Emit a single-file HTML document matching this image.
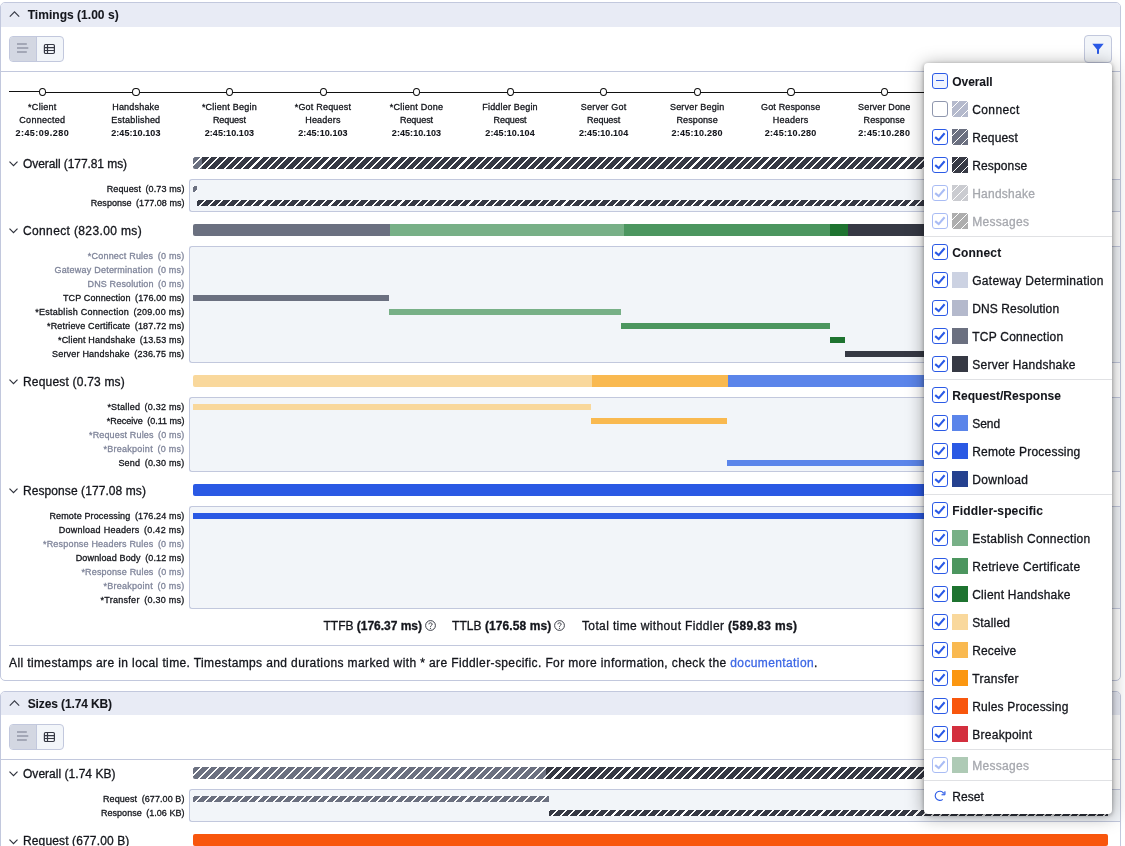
<!DOCTYPE html>
<html><head><meta charset="utf-8"><title>Timings</title><style>
html,body{margin:0;padding:0}
body{width:1125px;height:846px;overflow:hidden;background:#fff;position:relative;font-family:"Liberation Sans", sans-serif;color:#14161c}
#root{position:absolute;left:0;top:0;width:1125px;height:846px;overflow:hidden;will-change:transform}
#root>div,#root>span,#root>svg,.a{position:absolute}
.t{white-space:nowrap;-webkit-text-stroke:0.3px currentColor}
.panel{border:1px solid #c2c8dd;border-radius:5px;background:#fff;overflow:hidden}
.ph{height:23.7px;background:#e8ebf5}
</style></head><body><div id="root">
<div class="panel" style="left:0;top:2px;width:1119px;height:677px;"><div class="ph" style="height:23.7px"></div></div>
<svg class="a" style="left:8.7px;top:9.0px" width="11" height="11" viewBox="0 0 11 11"><path d="M0.8 7.6 L5.5 2.9 L10.2 7.6" fill="none" stroke="#3a3d48" stroke-width="1.2"/></svg>
<span id="t1" class="t" style="left:27.7px;top:6.9px;font-size:12px;line-height:16px;font-weight:700;color:#14161c;-webkit-text-stroke-width:.08px;letter-spacing:0.032px;">Timings (1.00 s)</span>
<div class="a" style="left:9px;top:36px;width:52.5px;height:24px;border:1px solid #c2c8dd;border-radius:4px;background:#f2f5f9;overflow:hidden"><div style="width:26.3px;height:25px;background:#d3d7e2;border-right:1px solid #c2c8dd"></div></div>
<svg class="a" style="left:16px;top:42.0px" width="13" height="12" viewBox="0 0 13 12"><path d="M1 2h9.8M1 6h11.3M1 10h9.8" stroke="#747989" stroke-width="1.15" fill="none"/></svg>
<svg class="a" style="left:43.3px;top:42.8px" width="13" height="12" viewBox="0 0 13 12"><rect x="1.4" y="1.5" width="10" height="9" rx="1.2" fill="none" stroke="#363944" stroke-width="1.2"/><path d="M1.4 4.6h10M1.4 7.5h10M4.5 1.5v9" stroke="#363944" stroke-width="1.2" fill="none"/></svg>
<div style="left:1px;top:71px;width:1119px;height:1px;background:#c2c8dd"></div>
<div class="panel" style="left:0;top:691px;width:1119px;height:200px;"><div class="ph" style="height:22.7px"></div></div>
<svg class="a" style="left:8.7px;top:698.0px" width="11" height="11" viewBox="0 0 11 11"><path d="M0.8 7.6 L5.5 2.9 L10.2 7.6" fill="none" stroke="#3a3d48" stroke-width="1.2"/></svg>
<span id="t2" class="t" style="left:27.7px;top:695.5px;font-size:12px;line-height:16px;font-weight:700;color:#14161c;-webkit-text-stroke-width:.08px;letter-spacing:-0.116px;">Sizes (1.74 KB)</span>
<div class="a" style="left:9px;top:724.4px;width:52.5px;height:24px;border:1px solid #c2c8dd;border-radius:4px;background:#f2f5f9;overflow:hidden"><div style="width:26.3px;height:25px;background:#d3d7e2;border-right:1px solid #c2c8dd"></div></div>
<svg class="a" style="left:16px;top:730.4px" width="13" height="12" viewBox="0 0 13 12"><path d="M1 2h9.8M1 6h11.3M1 10h9.8" stroke="#747989" stroke-width="1.15" fill="none"/></svg>
<svg class="a" style="left:43.3px;top:731.1999999999999px" width="13" height="12" viewBox="0 0 13 12"><rect x="1.4" y="1.5" width="10" height="9" rx="1.2" fill="none" stroke="#363944" stroke-width="1.2"/><path d="M1.4 4.6h10M1.4 7.5h10M4.5 1.5v9" stroke="#363944" stroke-width="1.2" fill="none"/></svg>
<div style="left:1px;top:759px;width:1119px;height:1px;background:#c2c8dd"></div>
<div class="a" style="left:1084px;top:35px;width:26px;height:26px;border:1px solid #c2c8dd;border-radius:4px;background:#f2f5f9"></div>
<svg class="a" style="left:1092.2px;top:43.4px" width="12" height="12" viewBox="0 0 12 12"><path d="M0.3 0.8h11.4L7 6.4v3.6c0 .6-.4 1-1 1s-1-.4-1-1V6.4z" fill="#2b5ae6"/></svg>
<div style="left:9px;top:91px;width:32px;height:1px;background:#111"></div>
<div style="left:41px;top:92px;width:1067px;height:1px;background:#111"></div>
<div class="a" style="left:38.85px;top:87.85000000000001px;width:5.3px;height:6.1px;border:1px solid #111;border-radius:50%;background:#fff"></div>
<span id="t3" class="t" style="left:42.3px;transform:translateX(-50%);top:100.5px;font-size:9px;line-height:13px;font-weight:400;color:#14161c;letter-spacing:0.269px;">*Client</span>
<span id="t4" class="t" style="left:42.3px;transform:translateX(-50%);top:114.1px;font-size:9px;line-height:13px;font-weight:400;color:#14161c;letter-spacing:0.261px;">Connected</span>
<span id="t5" class="t" style="left:42.3px;transform:translateX(-50%);top:127.1px;font-size:9px;line-height:13px;font-weight:700;color:#14161c;-webkit-text-stroke-width:.08px;letter-spacing:0.468px;">2:45:09.280</span>
<div class="a" style="left:132.39999999999998px;top:87.85000000000001px;width:5.3px;height:6.1px;border:1px solid #111;border-radius:50%;background:#fff"></div>
<span id="t6" class="t" style="left:135.85px;transform:translateX(-50%);top:100.5px;font-size:9px;line-height:13px;font-weight:400;color:#14161c;letter-spacing:0.195px;">Handshake</span>
<span id="t7" class="t" style="left:135.85px;transform:translateX(-50%);top:114.1px;font-size:9px;line-height:13px;font-weight:400;color:#14161c;letter-spacing:0.224px;">Established</span>
<span id="t8" class="t" style="left:135.85px;transform:translateX(-50%);top:127.1px;font-size:9px;line-height:13px;font-weight:700;color:#14161c;-webkit-text-stroke-width:.08px;letter-spacing:0.078px;">2:45:10.103</span>
<div class="a" style="left:225.94999999999996px;top:87.85000000000001px;width:5.3px;height:6.1px;border:1px solid #111;border-radius:50%;background:#fff"></div>
<span id="t9" class="t" style="left:229.39999999999998px;transform:translateX(-50%);top:100.5px;font-size:9px;line-height:13px;font-weight:400;color:#14161c;letter-spacing:0.228px;">*Client Begin</span>
<span id="t10" class="t" style="left:229.39999999999998px;transform:translateX(-50%);top:114.1px;font-size:9px;line-height:13px;font-weight:400;color:#14161c;letter-spacing:-0.076px;">Request</span>
<span id="t11" class="t" style="left:229.39999999999998px;transform:translateX(-50%);top:127.1px;font-size:9px;line-height:13px;font-weight:700;color:#14161c;-webkit-text-stroke-width:.08px;letter-spacing:0.078px;">2:45:10.103</span>
<div class="a" style="left:319.5px;top:87.85000000000001px;width:5.3px;height:6.1px;border:1px solid #111;border-radius:50%;background:#fff"></div>
<span id="t12" class="t" style="left:322.95px;transform:translateX(-50%);top:100.5px;font-size:9px;line-height:13px;font-weight:400;color:#14161c;letter-spacing:0.206px;">*Got Request</span>
<span id="t13" class="t" style="left:322.95px;transform:translateX(-50%);top:114.1px;font-size:9px;line-height:13px;font-weight:400;color:#14161c;letter-spacing:0.210px;">Headers</span>
<span id="t14" class="t" style="left:322.95px;transform:translateX(-50%);top:127.1px;font-size:9px;line-height:13px;font-weight:700;color:#14161c;-webkit-text-stroke-width:.08px;letter-spacing:0.078px;">2:45:10.103</span>
<div class="a" style="left:413.05px;top:87.85000000000001px;width:5.3px;height:6.1px;border:1px solid #111;border-radius:50%;background:#fff"></div>
<span id="t15" class="t" style="left:416.5px;transform:translateX(-50%);top:100.5px;font-size:9px;line-height:13px;font-weight:400;color:#14161c;letter-spacing:0.247px;">*Client Done</span>
<span id="t16" class="t" style="left:416.5px;transform:translateX(-50%);top:114.1px;font-size:9px;line-height:13px;font-weight:400;color:#14161c;letter-spacing:-0.076px;">Request</span>
<span id="t17" class="t" style="left:416.5px;transform:translateX(-50%);top:127.1px;font-size:9px;line-height:13px;font-weight:700;color:#14161c;-webkit-text-stroke-width:.08px;letter-spacing:0.078px;">2:45:10.103</span>
<div class="a" style="left:506.6px;top:87.85000000000001px;width:5.3px;height:6.1px;border:1px solid #111;border-radius:50%;background:#fff"></div>
<span id="t18" class="t" style="left:510.05px;transform:translateX(-50%);top:100.5px;font-size:9px;line-height:13px;font-weight:400;color:#14161c;letter-spacing:0.190px;">Fiddler Begin</span>
<span id="t19" class="t" style="left:510.05px;transform:translateX(-50%);top:114.1px;font-size:9px;line-height:13px;font-weight:400;color:#14161c;letter-spacing:-0.076px;">Request</span>
<span id="t20" class="t" style="left:510.05px;transform:translateX(-50%);top:127.1px;font-size:9px;line-height:13px;font-weight:700;color:#14161c;-webkit-text-stroke-width:.08px;letter-spacing:0.078px;">2:45:10.104</span>
<div class="a" style="left:600.15px;top:87.85000000000001px;width:5.3px;height:6.1px;border:1px solid #111;border-radius:50%;background:#fff"></div>
<span id="t21" class="t" style="left:603.5999999999999px;transform:translateX(-50%);top:100.5px;font-size:9px;line-height:13px;font-weight:400;color:#14161c;letter-spacing:0.198px;">Server Got</span>
<span id="t22" class="t" style="left:603.5999999999999px;transform:translateX(-50%);top:114.1px;font-size:9px;line-height:13px;font-weight:400;color:#14161c;letter-spacing:-0.076px;">Request</span>
<span id="t23" class="t" style="left:603.5999999999999px;transform:translateX(-50%);top:127.1px;font-size:9px;line-height:13px;font-weight:700;color:#14161c;-webkit-text-stroke-width:.08px;letter-spacing:0.078px;">2:45:10.104</span>
<div class="a" style="left:693.7px;top:87.85000000000001px;width:5.3px;height:6.1px;border:1px solid #111;border-radius:50%;background:#fff"></div>
<span id="t24" class="t" style="left:697.15px;transform:translateX(-50%);top:100.5px;font-size:9px;line-height:13px;font-weight:400;color:#14161c;letter-spacing:0.197px;">Server Begin</span>
<span id="t25" class="t" style="left:697.15px;transform:translateX(-50%);top:114.1px;font-size:9px;line-height:13px;font-weight:400;color:#14161c;letter-spacing:0.084px;">Response</span>
<span id="t26" class="t" style="left:697.15px;transform:translateX(-50%);top:127.1px;font-size:9px;line-height:13px;font-weight:700;color:#14161c;-webkit-text-stroke-width:.08px;letter-spacing:0.268px;">2:45:10.280</span>
<div class="a" style="left:787.25px;top:87.85000000000001px;width:5.3px;height:6.1px;border:1px solid #111;border-radius:50%;background:#fff"></div>
<span id="t27" class="t" style="left:790.6999999999999px;transform:translateX(-50%);top:100.5px;font-size:9px;line-height:13px;font-weight:400;color:#14161c;letter-spacing:0.138px;">Got Response</span>
<span id="t28" class="t" style="left:790.6999999999999px;transform:translateX(-50%);top:114.1px;font-size:9px;line-height:13px;font-weight:400;color:#14161c;letter-spacing:0.238px;">Headers</span>
<span id="t29" class="t" style="left:790.6999999999999px;transform:translateX(-50%);top:127.1px;font-size:9px;line-height:13px;font-weight:700;color:#14161c;-webkit-text-stroke-width:.08px;letter-spacing:0.314px;">2:45:10.280</span>
<div class="a" style="left:880.8px;top:87.85000000000001px;width:5.3px;height:6.1px;border:1px solid #111;border-radius:50%;background:#fff"></div>
<span id="t30" class="t" style="left:884.2499999999999px;transform:translateX(-50%);top:100.5px;font-size:9px;line-height:13px;font-weight:400;color:#14161c;letter-spacing:0.170px;">Server Done</span>
<span id="t31" class="t" style="left:884.2499999999999px;transform:translateX(-50%);top:114.1px;font-size:9px;line-height:13px;font-weight:400;color:#14161c;letter-spacing:0.096px;">Response</span>
<span id="t32" class="t" style="left:884.2499999999999px;transform:translateX(-50%);top:127.1px;font-size:9px;line-height:13px;font-weight:700;color:#14161c;-webkit-text-stroke-width:.08px;letter-spacing:0.314px;">2:45:10.280</span>
<svg class="a" style="left:9.3px;top:161.3px" width="9" height="6" viewBox="0 0 9 6"><path d="M0.5 0.7 L4.5 4.7 L8.5 0.7" fill="none" stroke="#2e313b" stroke-width="1.15"/></svg>
<span id="t33" class="t" style="left:23px;top:156.10000000000002px;font-size:12px;line-height:16px;font-weight:400;color:#14161c;letter-spacing:-0.072px;">Overall (177.81 ms)</span>
<div class="a" style="left:193px;top:157px;width:915px;height:12px;background:repeating-linear-gradient(135deg,#fff 0,#fff 0.75px,transparent 0.75px,transparent 5.35px,#fff 5.35px,#fff 6.1px),linear-gradient(90deg,#6b7080 0,#6b7080 9px,#363944 9px);border-radius:2px"></div>
<div class="a" style="left:189px;top:179px;width:930px;height:31px;border:1px solid #c2c8dd;border-right:none;border-radius:3px 0 0 3px;background:#f2f5f9"></div>
<span id="t34" class="t" style="right:940.5px;top:182.5px;font-size:9px;line-height:13px;font-weight:400;color:#14161c;letter-spacing:0.110px;">Request<span style="margin-left:4.5px">(0.73 ms)</span></span>
<span id="t35" class="t" style="right:940.5px;top:196.5px;font-size:9px;line-height:13px;font-weight:400;color:#14161c;letter-spacing:0.034px;">Response<span style="margin-left:4.5px">(177.08 ms)</span></span>
<div class="a" style="left:193px;top:186px;width:4.199999999999989px;height:6px;background:repeating-linear-gradient(135deg,#fff 0,#fff 0.75px,#6b7080 0.75px,#6b7080 5.35px,#fff 5.35px,#fff 6.1px);"></div>
<div class="a" style="left:197px;top:200px;width:911px;height:6px;background:repeating-linear-gradient(135deg,#fff 0,#fff 0.75px,#363944 0.75px,#363944 5.35px,#fff 5.35px,#fff 6.1px);"></div>
<svg class="a" style="left:9.3px;top:228.3px" width="9" height="6" viewBox="0 0 9 6"><path d="M0.5 0.7 L4.5 4.7 L8.5 0.7" fill="none" stroke="#2e313b" stroke-width="1.15"/></svg>
<span id="t36" class="t" style="left:23px;top:223.10000000000002px;font-size:12px;line-height:16px;font-weight:400;color:#14161c;letter-spacing:0.365px;">Connect (823.00 ms)</span>
<div class="a" style="left:193px;top:224px;width:915px;height:12px;background:linear-gradient(90deg,#6b7080 0,#6b7080 197px,#78b087 197px,#78b087 431px,#4c965f 431px,#4c965f 637px,#1e7330 637px,#1e7330 655px,#363944 655px);border-radius:2px"></div>
<div class="a" style="left:189px;top:246px;width:930px;height:115px;border:1px solid #c2c8dd;border-right:none;border-radius:3px 0 0 3px;background:#f2f5f9"></div>
<span id="t37" class="t" style="right:940.5px;top:249.5px;font-size:9px;line-height:13px;font-weight:400;color:#80869b;letter-spacing:0.208px;">*Connect Rules<span style="margin-left:4.5px">(0 ms)</span></span>
<span id="t38" class="t" style="right:940.5px;top:263.5px;font-size:9px;line-height:13px;font-weight:400;color:#80869b;letter-spacing:0.224px;">Gateway Determination<span style="margin-left:4.5px">(0 ms)</span></span>
<span id="t39" class="t" style="right:940.5px;top:277.5px;font-size:9px;line-height:13px;font-weight:400;color:#80869b;letter-spacing:0.148px;">DNS Resolution<span style="margin-left:4.5px">(0 ms)</span></span>
<span id="t40" class="t" style="right:940.5px;top:291.5px;font-size:9px;line-height:13px;font-weight:400;color:#14161c;letter-spacing:0.124px;">TCP Connection<span style="margin-left:4.5px">(176.00 ms)</span></span>
<span id="t41" class="t" style="right:940.5px;top:305.5px;font-size:9px;line-height:13px;font-weight:400;color:#14161c;letter-spacing:0.272px;">*Establish Connection<span style="margin-left:4.5px">(209.00 ms)</span></span>
<span id="t42" class="t" style="right:940.5px;top:319.5px;font-size:9px;line-height:13px;font-weight:400;color:#14161c;letter-spacing:0.154px;">*Retrieve Certificate<span style="margin-left:4.5px">(187.72 ms)</span></span>
<span id="t43" class="t" style="right:940.5px;top:333.5px;font-size:9px;line-height:13px;font-weight:400;color:#14161c;letter-spacing:0.164px;">*Client Handshake<span style="margin-left:4.5px">(13.53 ms)</span></span>
<span id="t44" class="t" style="right:940.5px;top:347.5px;font-size:9px;line-height:13px;font-weight:400;color:#14161c;letter-spacing:0.201px;">Server Handshake<span style="margin-left:4.5px">(236.75 ms)</span></span>
<div class="a" style="left:193px;top:295px;width:196px;height:6px;background:#6b7080"></div>
<div class="a" style="left:389px;top:309px;width:232px;height:6px;background:#78b087"></div>
<div class="a" style="left:621px;top:323px;width:209px;height:6px;background:#4c965f"></div>
<div class="a" style="left:830px;top:337px;width:15px;height:6px;background:#1e7330"></div>
<div class="a" style="left:845px;top:351px;width:263px;height:6px;background:#363944"></div>
<svg class="a" style="left:9.3px;top:379.3px" width="9" height="6" viewBox="0 0 9 6"><path d="M0.5 0.7 L4.5 4.7 L8.5 0.7" fill="none" stroke="#2e313b" stroke-width="1.15"/></svg>
<span id="t45" class="t" style="left:23px;top:374.1px;font-size:12px;line-height:16px;font-weight:400;color:#14161c;letter-spacing:0.193px;">Request (0.73 ms)</span>
<div class="a" style="left:193px;top:375px;width:915px;height:12px;background:linear-gradient(90deg,#f9d89c 0,#f9d89c 399px,#f9b950 399px,#f9b950 535px,#5b85ea 535px);border-radius:2px"></div>
<div class="a" style="left:189px;top:397px;width:930px;height:73px;border:1px solid #c2c8dd;border-right:none;border-radius:3px 0 0 3px;background:#f2f5f9"></div>
<span id="t46" class="t" style="right:940.5px;top:400.5px;font-size:9px;line-height:13px;font-weight:400;color:#14161c;letter-spacing:0.209px;">*Stalled<span style="margin-left:4.5px">(0.32 ms)</span></span>
<span id="t47" class="t" style="right:940.5px;top:414.5px;font-size:9px;line-height:13px;font-weight:400;color:#14161c;letter-spacing:-0.004px;">*Receive<span style="margin-left:4.5px">(0.11 ms)</span></span>
<span id="t48" class="t" style="right:940.5px;top:428.5px;font-size:9px;line-height:13px;font-weight:400;color:#80869b;letter-spacing:0.148px;">*Request Rules<span style="margin-left:4.5px">(0 ms)</span></span>
<span id="t49" class="t" style="right:940.5px;top:442.5px;font-size:9px;line-height:13px;font-weight:400;color:#80869b;letter-spacing:0.263px;">*Breakpoint<span style="margin-left:4.5px">(0 ms)</span></span>
<span id="t50" class="t" style="right:940.5px;top:456.5px;font-size:9px;line-height:13px;font-weight:400;color:#14161c;letter-spacing:0.196px;">Send<span style="margin-left:4.5px">(0.30 ms)</span></span>
<div class="a" style="left:193px;top:404px;width:398px;height:6px;background:#f9d89c"></div>
<div class="a" style="left:591px;top:418px;width:136px;height:6px;background:#f9b950"></div>
<div class="a" style="left:727px;top:460px;width:381px;height:6px;background:#5b85ea"></div>
<svg class="a" style="left:9.3px;top:488.3px" width="9" height="6" viewBox="0 0 9 6"><path d="M0.5 0.7 L4.5 4.7 L8.5 0.7" fill="none" stroke="#2e313b" stroke-width="1.15"/></svg>
<span id="t51" class="t" style="left:23px;top:483.1px;font-size:12px;line-height:16px;font-weight:400;color:#14161c;letter-spacing:0.080px;">Response (177.08 ms)</span>
<div class="a" style="left:193px;top:484px;width:915px;height:12px;background:#2a59e4;border-radius:2px"></div>
<div class="a" style="left:189px;top:506px;width:930px;height:101px;border:1px solid #c2c8dd;border-right:none;border-radius:3px 0 0 3px;background:#f2f5f9"></div>
<span id="t52" class="t" style="right:940.5px;top:509.49999999999994px;font-size:9px;line-height:13px;font-weight:400;color:#14161c;letter-spacing:0.144px;">Remote Processing<span style="margin-left:4.5px">(176.24 ms)</span></span>
<span id="t53" class="t" style="right:940.5px;top:523.5px;font-size:9px;line-height:13px;font-weight:400;color:#14161c;letter-spacing:0.269px;">Download Headers<span style="margin-left:4.5px">(0.42 ms)</span></span>
<span id="t54" class="t" style="right:940.5px;top:537.5px;font-size:9px;line-height:13px;font-weight:400;color:#80869b;letter-spacing:0.188px;">*Response Headers Rules<span style="margin-left:4.5px">(0 ms)</span></span>
<span id="t55" class="t" style="right:940.5px;top:551.5px;font-size:9px;line-height:13px;font-weight:400;color:#14161c;letter-spacing:0.147px;">Download Body<span style="margin-left:4.5px">(0.12 ms)</span></span>
<span id="t56" class="t" style="right:940.5px;top:565.5px;font-size:9px;line-height:13px;font-weight:400;color:#80869b;letter-spacing:0.169px;">*Response Rules<span style="margin-left:4.5px">(0 ms)</span></span>
<span id="t57" class="t" style="right:940.5px;top:579.5px;font-size:9px;line-height:13px;font-weight:400;color:#80869b;letter-spacing:0.263px;">*Breakpoint<span style="margin-left:4.5px">(0 ms)</span></span>
<span id="t58" class="t" style="right:940.5px;top:593.5px;font-size:9px;line-height:13px;font-weight:400;color:#14161c;letter-spacing:0.261px;">*Transfer<span style="margin-left:4.5px">(0.30 ms)</span></span>
<div class="a" style="left:193px;top:513px;width:912px;height:6px;background:#2a59e4"></div>
<span id="t59" class="t" style="left:323.5px;top:617.8px;font-size:12px;line-height:16px;font-weight:400;color:#14161c;letter-spacing:-0.013px;">TTFB <b>(176.37 ms)</b></span>
<svg class="a" style="left:425.3px;top:619.8px" width="11" height="11" viewBox="0 0 11 11"><circle cx="5.5" cy="5.5" r="4.9" fill="none" stroke="#33363f" stroke-width="0.95"/><path d="M3.9 4.3c0-2 3.2-2 3.2 0c0 1.2-1.6 1.1-1.6 2.5" fill="none" stroke="#33363f" stroke-width="1"/><circle cx="5.5" cy="8.3" r="0.6" fill="#33363f"/></svg>
<span id="t60" class="t" style="left:452px;top:617.8px;font-size:12px;line-height:16px;font-weight:400;color:#14161c;letter-spacing:0.072px;">TTLB <b>(176.58 ms)</b></span>
<svg class="a" style="left:554.3px;top:619.8px" width="11" height="11" viewBox="0 0 11 11"><circle cx="5.5" cy="5.5" r="4.9" fill="none" stroke="#33363f" stroke-width="0.95"/><path d="M3.9 4.3c0-2 3.2-2 3.2 0c0 1.2-1.6 1.1-1.6 2.5" fill="none" stroke="#33363f" stroke-width="1"/><circle cx="5.5" cy="8.3" r="0.6" fill="#33363f"/></svg>
<span id="t61" class="t" style="left:582px;top:617.8px;font-size:12px;line-height:16px;font-weight:400;color:#14161c;letter-spacing:0.368px;">Total time without Fiddler <b>(589.83 ms)</b></span>
<div style="left:9px;top:645px;width:1099px;height:1px;background:#c2c8dd"></div>
<span id="t62" class="t" style="left:9px;top:654.5px;font-size:12px;line-height:16px;font-weight:400;color:#14161c;letter-spacing:0.381px;">All timestamps are in local time. Timestamps and durations marked with * are Fiddler-specific. For more information, check the <span style="color:#3d68e6">documentation</span>.</span>
<svg class="a" style="left:9.3px;top:771.3px" width="9" height="6" viewBox="0 0 9 6"><path d="M0.5 0.7 L4.5 4.7 L8.5 0.7" fill="none" stroke="#2e313b" stroke-width="1.15"/></svg>
<span id="t63" class="t" style="left:23px;top:766.0999999999999px;font-size:12px;line-height:16px;font-weight:400;color:#14161c;letter-spacing:0.027px;">Overall (1.74 KB)</span>
<div class="a" style="left:193px;top:767px;width:915px;height:12px;background:repeating-linear-gradient(135deg,#fff 0,#fff 0.75px,transparent 0.75px,transparent 5.35px,#fff 5.35px,#fff 6.1px),linear-gradient(90deg,#6b7080 0,#6b7080 353px,#363944 353px);border-radius:2px"></div>
<div class="a" style="left:189px;top:789px;width:930px;height:31px;border:1px solid #c2c8dd;border-right:none;border-radius:3px 0 0 3px;background:#f2f5f9"></div>
<span id="t64" class="t" style="right:940.5px;top:792.5px;font-size:9px;line-height:13px;font-weight:400;color:#14161c;letter-spacing:0.085px;">Request<span style="margin-left:4.5px">(677.00 B)</span></span>
<span id="t65" class="t" style="right:940.5px;top:806.5px;font-size:9px;line-height:13px;font-weight:400;color:#14161c;letter-spacing:0.026px;">Response<span style="margin-left:4.5px">(1.06 KB)</span></span>
<div class="a" style="left:193px;top:796px;width:356px;height:6px;background:repeating-linear-gradient(135deg,#fff 0,#fff 0.75px,#6b7080 0.75px,#6b7080 5.35px,#fff 5.35px,#fff 6.1px);"></div>
<div class="a" style="left:549px;top:810px;width:559px;height:6px;background:repeating-linear-gradient(135deg,#fff 0,#fff 0.75px,#363944 0.75px,#363944 5.35px,#fff 5.35px,#fff 6.1px);"></div>
<svg class="a" style="left:9.3px;top:838.5px" width="9" height="6" viewBox="0 0 9 6"><path d="M0.5 0.7 L4.5 4.7 L8.5 0.7" fill="none" stroke="#2e313b" stroke-width="1.15"/></svg>
<span id="t66" class="t" style="left:23px;top:833.3px;font-size:12px;line-height:16px;font-weight:400;color:#14161c;letter-spacing:0.135px;">Request (677.00 B)</span>
<div class="a" style="left:193px;top:834px;width:915px;height:12px;background:#f8560d;border-radius:2px"></div>
<div class="a" style="left:924px;top:63px;width:188px;height:751px;background:#fff;border-radius:4px;box-shadow:0 2px 18px rgba(0,0,0,.37),0 1px 4px rgba(0,0,0,.33)"></div>
<div class="a" style="left:932px;top:73px;width:14px;height:14px;border:1px solid #2b5ae6;border-radius:3px;background:#f0f4fe;"></div>
<div class="a" style="left:936px;top:79.9px;width:8px;height:1.15px;background:#2b5ae6;"></div>
<span id="t67" class="t" style="left:952.3px;top:74.1px;font-size:12px;line-height:16px;font-weight:700;color:#14161c;-webkit-text-stroke-width:.08px;letter-spacing:-0.072px;">Overall</span>
<div class="a" style="left:932px;top:101px;width:14px;height:14px;border:1px solid #8f97ae;border-radius:3px;background:#fff;"></div>
<div class="a" style="left:952px;top:101px;width:16px;height:16px;background:linear-gradient(135deg,#b4b9cc 0px,#b4b9cc 4.30px,#fff 4.30px,#fff 5.50px,#b4b9cc 5.5px,#b4b9cc 10.81px,#fff 10.81px,#fff 11.81px,#b4b9cc 11.81px,#b4b9cc 17.00px,#fff 17.00px,#fff 18.20px,#b4b9cc 18.2px,#b4b9cc 23px);"></div>
<span id="t68" class="t" style="left:972.2px;top:102.1px;font-size:12px;line-height:16px;font-weight:400;color:#14161c;letter-spacing:0.400px;">Connect</span>
<div class="a" style="left:932px;top:129px;width:14px;height:14px;border:1px solid #2b5ae6;border-radius:3px;background:#fff;"></div>
<svg class="a" style="left:932px;top:129px;" width="16" height="16" viewBox="0 0 16 16"><path d="M3.2 8.1 L6.7 11.1 L12.6 4.2" fill="none" stroke="#2b5ae6" stroke-width="2.1"/></svg>
<div class="a" style="left:952px;top:129px;width:16px;height:16px;background:linear-gradient(135deg,#6b7080 0px,#6b7080 4.30px,#fff 4.30px,#fff 5.50px,#6b7080 5.5px,#6b7080 10.81px,#fff 10.81px,#fff 11.81px,#6b7080 11.81px,#6b7080 17.00px,#fff 17.00px,#fff 18.20px,#6b7080 18.2px,#6b7080 23px);"></div>
<span id="t69" class="t" style="left:972.2px;top:130.10000000000002px;font-size:12px;line-height:16px;font-weight:400;color:#14161c;letter-spacing:0.142px;">Request</span>
<div class="a" style="left:932px;top:157px;width:14px;height:14px;border:1px solid #2b5ae6;border-radius:3px;background:#fff;"></div>
<svg class="a" style="left:932px;top:157px;" width="16" height="16" viewBox="0 0 16 16"><path d="M3.2 8.1 L6.7 11.1 L12.6 4.2" fill="none" stroke="#2b5ae6" stroke-width="2.1"/></svg>
<div class="a" style="left:952px;top:157px;width:16px;height:16px;background:linear-gradient(135deg,#363944 0px,#363944 4.30px,#fff 4.30px,#fff 5.50px,#363944 5.5px,#363944 10.81px,#fff 10.81px,#fff 11.81px,#363944 11.81px,#363944 17.00px,#fff 17.00px,#fff 18.20px,#363944 18.2px,#363944 23px);"></div>
<span id="t70" class="t" style="left:972.2px;top:158.10000000000002px;font-size:12px;line-height:16px;font-weight:400;color:#14161c;letter-spacing:0.144px;">Response</span>
<div class="a" style="left:932px;top:185px;width:14px;height:14px;border:1px solid #2b5ae6;border-radius:3px;background:#fff;opacity:.4;"></div>
<svg class="a" style="left:932px;top:185px;opacity:.4;" width="16" height="16" viewBox="0 0 16 16"><path d="M3.2 8.1 L6.7 11.1 L12.6 4.2" fill="none" stroke="#2b5ae6" stroke-width="2.1"/></svg>
<div class="a" style="left:952px;top:185px;width:16px;height:16px;background:linear-gradient(135deg,#8a8d98 0px,#8a8d98 4.30px,#fff 4.30px,#fff 5.50px,#8a8d98 5.5px,#8a8d98 10.81px,#fff 10.81px,#fff 11.81px,#8a8d98 11.81px,#8a8d98 17.00px,#fff 17.00px,#fff 18.20px,#8a8d98 18.2px,#8a8d98 23px);opacity:.45;"></div>
<span id="t71" class="t" style="left:972.2px;top:186.10000000000002px;font-size:12px;line-height:16px;font-weight:400;color:#a6a8ae;letter-spacing:0.242px;">Handshake</span>
<div class="a" style="left:932px;top:213px;width:14px;height:14px;border:1px solid #2b5ae6;border-radius:3px;background:#fff;opacity:.4;"></div>
<svg class="a" style="left:932px;top:213px;opacity:.4;" width="16" height="16" viewBox="0 0 16 16"><path d="M3.2 8.1 L6.7 11.1 L12.6 4.2" fill="none" stroke="#2b5ae6" stroke-width="2.1"/></svg>
<div class="a" style="left:952px;top:213px;width:16px;height:16px;background:linear-gradient(135deg,#4a4a4a 0px,#4a4a4a 4.30px,#fff 4.30px,#fff 5.50px,#4a4a4a 5.5px,#4a4a4a 10.81px,#fff 10.81px,#fff 11.81px,#4a4a4a 11.81px,#4a4a4a 17.00px,#fff 17.00px,#fff 18.20px,#4a4a4a 18.2px,#4a4a4a 23px);opacity:.45;"></div>
<span id="t72" class="t" style="left:972.2px;top:214.10000000000002px;font-size:12px;line-height:16px;font-weight:400;color:#a6a8ae;letter-spacing:0.287px;">Messages</span>
<div style="left:924px;top:236px;width:188px;height:1px;background:#e0e1e4"></div>
<div class="a" style="left:932px;top:244px;width:14px;height:14px;border:1px solid #2b5ae6;border-radius:3px;background:#fff;"></div>
<svg class="a" style="left:932px;top:244px;" width="16" height="16" viewBox="0 0 16 16"><path d="M3.2 8.1 L6.7 11.1 L12.6 4.2" fill="none" stroke="#2b5ae6" stroke-width="2.1"/></svg>
<span id="t73" class="t" style="left:952.3px;top:245.10000000000002px;font-size:12px;line-height:16px;font-weight:700;color:#14161c;-webkit-text-stroke-width:.08px;letter-spacing:0.143px;">Connect</span>
<div class="a" style="left:932px;top:272px;width:14px;height:14px;border:1px solid #2b5ae6;border-radius:3px;background:#fff;"></div>
<svg class="a" style="left:932px;top:272px;" width="16" height="16" viewBox="0 0 16 16"><path d="M3.2 8.1 L6.7 11.1 L12.6 4.2" fill="none" stroke="#2b5ae6" stroke-width="2.1"/></svg>
<div class="a" style="left:952px;top:272px;width:16px;height:16px;background:#ccd2e2;"></div>
<span id="t74" class="t" style="left:972.2px;top:273.1px;font-size:12px;line-height:16px;font-weight:400;color:#14161c;letter-spacing:0.296px;">Gateway Determination</span>
<div class="a" style="left:932px;top:300px;width:14px;height:14px;border:1px solid #2b5ae6;border-radius:3px;background:#fff;"></div>
<svg class="a" style="left:932px;top:300px;" width="16" height="16" viewBox="0 0 16 16"><path d="M3.2 8.1 L6.7 11.1 L12.6 4.2" fill="none" stroke="#2b5ae6" stroke-width="2.1"/></svg>
<div class="a" style="left:952px;top:300px;width:16px;height:16px;background:#b4b9cc;"></div>
<span id="t75" class="t" style="left:972.2px;top:301.1px;font-size:12px;line-height:16px;font-weight:400;color:#14161c;letter-spacing:0.116px;">DNS Resolution</span>
<div class="a" style="left:932px;top:328px;width:14px;height:14px;border:1px solid #2b5ae6;border-radius:3px;background:#fff;"></div>
<svg class="a" style="left:932px;top:328px;" width="16" height="16" viewBox="0 0 16 16"><path d="M3.2 8.1 L6.7 11.1 L12.6 4.2" fill="none" stroke="#2b5ae6" stroke-width="2.1"/></svg>
<div class="a" style="left:952px;top:328px;width:16px;height:16px;background:#6b7080;"></div>
<span id="t76" class="t" style="left:972.2px;top:329.1px;font-size:12px;line-height:16px;font-weight:400;color:#14161c;letter-spacing:0.241px;">TCP Connection</span>
<div class="a" style="left:932px;top:356px;width:14px;height:14px;border:1px solid #2b5ae6;border-radius:3px;background:#fff;"></div>
<svg class="a" style="left:932px;top:356px;" width="16" height="16" viewBox="0 0 16 16"><path d="M3.2 8.1 L6.7 11.1 L12.6 4.2" fill="none" stroke="#2b5ae6" stroke-width="2.1"/></svg>
<div class="a" style="left:952px;top:356px;width:16px;height:16px;background:#363944;"></div>
<span id="t77" class="t" style="left:972.2px;top:357.1px;font-size:12px;line-height:16px;font-weight:400;color:#14161c;letter-spacing:0.257px;">Server Handshake</span>
<div style="left:924px;top:379px;width:188px;height:1px;background:#e0e1e4"></div>
<div class="a" style="left:932px;top:387px;width:14px;height:14px;border:1px solid #2b5ae6;border-radius:3px;background:#fff;"></div>
<svg class="a" style="left:932px;top:387px;" width="16" height="16" viewBox="0 0 16 16"><path d="M3.2 8.1 L6.7 11.1 L12.6 4.2" fill="none" stroke="#2b5ae6" stroke-width="2.1"/></svg>
<span id="t78" class="t" style="left:952.3px;top:388.1px;font-size:12px;line-height:16px;font-weight:700;color:#14161c;-webkit-text-stroke-width:.08px;letter-spacing:0.042px;">Request/Response</span>
<div class="a" style="left:932px;top:415px;width:14px;height:14px;border:1px solid #2b5ae6;border-radius:3px;background:#fff;"></div>
<svg class="a" style="left:932px;top:415px;" width="16" height="16" viewBox="0 0 16 16"><path d="M3.2 8.1 L6.7 11.1 L12.6 4.2" fill="none" stroke="#2b5ae6" stroke-width="2.1"/></svg>
<div class="a" style="left:952px;top:415px;width:16px;height:16px;background:#5b85ea;"></div>
<span id="t79" class="t" style="left:972.2px;top:416.1px;font-size:12px;line-height:16px;font-weight:400;color:#14161c;letter-spacing:-0.008px;">Send</span>
<div class="a" style="left:932px;top:443px;width:14px;height:14px;border:1px solid #2b5ae6;border-radius:3px;background:#fff;"></div>
<svg class="a" style="left:932px;top:443px;" width="16" height="16" viewBox="0 0 16 16"><path d="M3.2 8.1 L6.7 11.1 L12.6 4.2" fill="none" stroke="#2b5ae6" stroke-width="2.1"/></svg>
<div class="a" style="left:952px;top:443px;width:16px;height:16px;background:#2a59e4;"></div>
<span id="t80" class="t" style="left:972.2px;top:444.1px;font-size:12px;line-height:16px;font-weight:400;color:#14161c;letter-spacing:0.211px;">Remote Processing</span>
<div class="a" style="left:932px;top:471px;width:14px;height:14px;border:1px solid #2b5ae6;border-radius:3px;background:#fff;"></div>
<svg class="a" style="left:932px;top:471px;" width="16" height="16" viewBox="0 0 16 16"><path d="M3.2 8.1 L6.7 11.1 L12.6 4.2" fill="none" stroke="#2b5ae6" stroke-width="2.1"/></svg>
<div class="a" style="left:952px;top:471px;width:16px;height:16px;background:#25418f;"></div>
<span id="t81" class="t" style="left:972.2px;top:472.1px;font-size:12px;line-height:16px;font-weight:400;color:#14161c;letter-spacing:0.353px;">Download</span>
<div style="left:924px;top:494px;width:188px;height:1px;background:#e0e1e4"></div>
<div class="a" style="left:932px;top:502px;width:14px;height:14px;border:1px solid #2b5ae6;border-radius:3px;background:#fff;"></div>
<svg class="a" style="left:932px;top:502px;" width="16" height="16" viewBox="0 0 16 16"><path d="M3.2 8.1 L6.7 11.1 L12.6 4.2" fill="none" stroke="#2b5ae6" stroke-width="2.1"/></svg>
<span id="t82" class="t" style="left:952.3px;top:503.1px;font-size:12px;line-height:16px;font-weight:700;color:#14161c;-webkit-text-stroke-width:.08px;letter-spacing:0.132px;">Fiddler-specific</span>
<div class="a" style="left:932px;top:530px;width:14px;height:14px;border:1px solid #2b5ae6;border-radius:3px;background:#fff;"></div>
<svg class="a" style="left:932px;top:530px;" width="16" height="16" viewBox="0 0 16 16"><path d="M3.2 8.1 L6.7 11.1 L12.6 4.2" fill="none" stroke="#2b5ae6" stroke-width="2.1"/></svg>
<div class="a" style="left:952px;top:530px;width:16px;height:16px;background:#78b087;"></div>
<span id="t83" class="t" style="left:972.2px;top:531.0999999999999px;font-size:12px;line-height:16px;font-weight:400;color:#14161c;letter-spacing:0.278px;">Establish Connection</span>
<div class="a" style="left:932px;top:558px;width:14px;height:14px;border:1px solid #2b5ae6;border-radius:3px;background:#fff;"></div>
<svg class="a" style="left:932px;top:558px;" width="16" height="16" viewBox="0 0 16 16"><path d="M3.2 8.1 L6.7 11.1 L12.6 4.2" fill="none" stroke="#2b5ae6" stroke-width="2.1"/></svg>
<div class="a" style="left:952px;top:558px;width:16px;height:16px;background:#4c965f;"></div>
<span id="t84" class="t" style="left:972.2px;top:559.0999999999999px;font-size:12px;line-height:16px;font-weight:400;color:#14161c;letter-spacing:0.308px;">Retrieve Certificate</span>
<div class="a" style="left:932px;top:586px;width:14px;height:14px;border:1px solid #2b5ae6;border-radius:3px;background:#fff;"></div>
<svg class="a" style="left:932px;top:586px;" width="16" height="16" viewBox="0 0 16 16"><path d="M3.2 8.1 L6.7 11.1 L12.6 4.2" fill="none" stroke="#2b5ae6" stroke-width="2.1"/></svg>
<div class="a" style="left:952px;top:586px;width:16px;height:16px;background:#1e7330;"></div>
<span id="t85" class="t" style="left:972.2px;top:587.0999999999999px;font-size:12px;line-height:16px;font-weight:400;color:#14161c;letter-spacing:0.235px;">Client Handshake</span>
<div class="a" style="left:932px;top:614px;width:14px;height:14px;border:1px solid #2b5ae6;border-radius:3px;background:#fff;"></div>
<svg class="a" style="left:932px;top:614px;" width="16" height="16" viewBox="0 0 16 16"><path d="M3.2 8.1 L6.7 11.1 L12.6 4.2" fill="none" stroke="#2b5ae6" stroke-width="2.1"/></svg>
<div class="a" style="left:952px;top:614px;width:16px;height:16px;background:#f9d89c;"></div>
<span id="t86" class="t" style="left:972.2px;top:615.0999999999999px;font-size:12px;line-height:16px;font-weight:400;color:#14161c;letter-spacing:0.171px;">Stalled</span>
<div class="a" style="left:932px;top:642px;width:14px;height:14px;border:1px solid #2b5ae6;border-radius:3px;background:#fff;"></div>
<svg class="a" style="left:932px;top:642px;" width="16" height="16" viewBox="0 0 16 16"><path d="M3.2 8.1 L6.7 11.1 L12.6 4.2" fill="none" stroke="#2b5ae6" stroke-width="2.1"/></svg>
<div class="a" style="left:952px;top:642px;width:16px;height:16px;background:#f9b950;"></div>
<span id="t87" class="t" style="left:972.2px;top:643.0999999999999px;font-size:12px;line-height:16px;font-weight:400;color:#14161c;letter-spacing:0.120px;">Receive</span>
<div class="a" style="left:932px;top:670px;width:14px;height:14px;border:1px solid #2b5ae6;border-radius:3px;background:#fff;"></div>
<svg class="a" style="left:932px;top:670px;" width="16" height="16" viewBox="0 0 16 16"><path d="M3.2 8.1 L6.7 11.1 L12.6 4.2" fill="none" stroke="#2b5ae6" stroke-width="2.1"/></svg>
<div class="a" style="left:952px;top:670px;width:16px;height:16px;background:#fb9711;"></div>
<span id="t88" class="t" style="left:972.2px;top:671.0999999999999px;font-size:12px;line-height:16px;font-weight:400;color:#14161c;letter-spacing:0.308px;">Transfer</span>
<div class="a" style="left:932px;top:698px;width:14px;height:14px;border:1px solid #2b5ae6;border-radius:3px;background:#fff;"></div>
<svg class="a" style="left:932px;top:698px;" width="16" height="16" viewBox="0 0 16 16"><path d="M3.2 8.1 L6.7 11.1 L12.6 4.2" fill="none" stroke="#2b5ae6" stroke-width="2.1"/></svg>
<div class="a" style="left:952px;top:698px;width:16px;height:16px;background:#f8560d;"></div>
<span id="t89" class="t" style="left:972.2px;top:699.0999999999999px;font-size:12px;line-height:16px;font-weight:400;color:#14161c;letter-spacing:0.189px;">Rules Processing</span>
<div class="a" style="left:932px;top:726px;width:14px;height:14px;border:1px solid #2b5ae6;border-radius:3px;background:#fff;"></div>
<svg class="a" style="left:932px;top:726px;" width="16" height="16" viewBox="0 0 16 16"><path d="M3.2 8.1 L6.7 11.1 L12.6 4.2" fill="none" stroke="#2b5ae6" stroke-width="2.1"/></svg>
<div class="a" style="left:952px;top:726px;width:16px;height:16px;background:#d32f3e;"></div>
<span id="t90" class="t" style="left:972.2px;top:727.0999999999999px;font-size:12px;line-height:16px;font-weight:400;color:#14161c;letter-spacing:0.283px;">Breakpoint</span>
<div style="left:924px;top:749px;width:188px;height:1px;background:#e0e1e4"></div>
<div class="a" style="left:932px;top:757px;width:14px;height:14px;border:1px solid #2b5ae6;border-radius:3px;background:#fff;opacity:.4;"></div>
<svg class="a" style="left:932px;top:757px;opacity:.4;" width="16" height="16" viewBox="0 0 16 16"><path d="M3.2 8.1 L6.7 11.1 L12.6 4.2" fill="none" stroke="#2b5ae6" stroke-width="2.1"/></svg>
<div class="a" style="left:952px;top:757px;width:16px;height:16px;background:#4c8a5c;opacity:.45;"></div>
<span id="t91" class="t" style="left:972.2px;top:758.0999999999999px;font-size:12px;line-height:16px;font-weight:400;color:#a6a8ae;letter-spacing:0.312px;">Messages</span>
<div style="left:924px;top:780px;width:188px;height:1px;background:#e0e1e4"></div>
<svg class="a" style="left:933px;top:789px" width="14" height="14" viewBox="0 0 14 14"><path d="M10.57 4.16A4.6 4.6 0 1 0 9.76 10.32" fill="none" stroke="#2b5ae6" stroke-width="1.1"/><path d="M12 2.3V5.8H8.5" fill="#2b5ae6" fill-opacity=".55" stroke="#2b5ae6" stroke-width="1"/></svg>
<span id="t92" class="t" style="left:952.3px;top:789.0999999999999px;font-size:12px;line-height:16px;font-weight:400;color:#14161c;letter-spacing:0.048px;">Reset</span>
</div></body></html>
